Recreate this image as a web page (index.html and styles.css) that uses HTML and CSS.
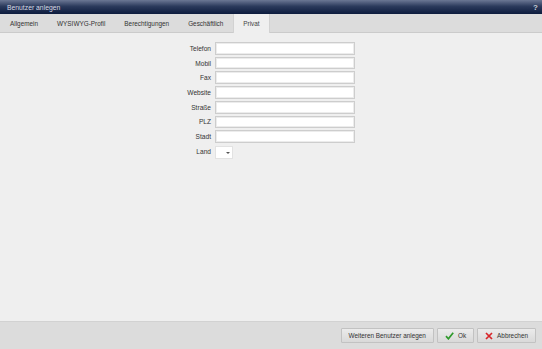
FILE: index.html
```html
<!DOCTYPE html>
<html>
<head>
    <title>Benutzer anlegen</title>
    <link rel="stylesheet" href="styles.css">
</head>
<body>
    <div class="dialog">
        <div class="titlebar">
            <span class="title">Benutzer anlegen</span>
            <span class="help">?</span>
        </div>
        <div class="tabs">
            <div class="tab">Allgemein</div>
            <div class="tab">WYSIWYG-Profil</div>
            <div class="tab">Berechtigungen</div>
            <div class="tab">Geschäftlich</div>
            <div class="tab active">Privat</div>
        </div>
        <div class="content">
            <div class="form">
                <label>Telefon</label><input type="text">
                <label>Mobil</label><input type="text">
                <label>Fax</label><input type="text">
                <label>Website</label><input type="text">
                <label>Straße</label><input type="text">
                <label>PLZ</label><input type="text">
                <label>Stadt</label><input type="text">
                <label>Land</label>
                <div class="select"><span class="arrow"></span></div>
            </div>
        </div>
        <div class="footer">
            <button class="btn">Weiteren Benutzer anlegen</button>
            <button class="btn">
                <svg width="9" height="8" viewBox="0 0 9 8"><polyline points="1,4.2 3.4,6.8 8.2,0.8" fill="none" stroke="#2f9a2c" stroke-width="1.7"/></svg>
                Ok
            </button>
            <button class="btn">
                <svg width="8" height="8" viewBox="0 0 8 8"><path d="M1 1 L7 7 M7 1 L1 7" stroke="#d8262a" stroke-width="1.7"/></svg>
                Abbrechen
            </button>
        </div>
    </div>
</body>
</html>
```

FILE: styles.css
```css
body {
    margin: 0;
    font-family: 'Liberation Sans', Arial, sans-serif;
    background-color: #efefef;
}

.dialog {
    display: flex;
    flex-direction: column;
    height: 349px;
    width: 542px;
}

.titlebar {
    height: 14px;
    display: flex;
    align-items: center;
    justify-content: space-between;
    padding: 0 4px 0 7px;
    background: linear-gradient(#6b7794, #2b3a5c 45%, #0c1b3d);
    color: #d9dce6;
    font-size: 6.8px;
}

.help {
    font-weight: bold;
    font-size: 8px;
    color: #c9cdd6;
}

.tabs {
    display: flex;
    height: 18px;
    background-color: #dcdcdc;
    border-bottom: 1px solid #cbcbcb;
    font-size: 6.4px;
    color: #333;
}

.tab {
    display: flex;
    align-items: center;
    padding: 0 9.5px;
}

.tab:first-child {
    padding-left: 10px;
}

.tab.active {
    background-color: #efefef;
    border-left: 1px solid #d2d2d2;
    border-right: 1px solid #d2d2d2;
    margin-bottom: -1px;
    color: #444;
}

.content {
    flex: 1;
    padding-top: 9px;
}

.form {
    display: grid;
    grid-template-columns: 61px 140px;
    grid-auto-rows: 12.7px;
    column-gap: 4px;
    row-gap: 2.03px;
    margin-left: 150px;
    font-size: 6.6px;
    color: #333;
}

.form label {
    text-align: right;
    align-self: center;
}

.form input {
    box-sizing: border-box;
    height: 12.7px;
    width: 140px;
    margin: 0;
    padding: 0;
    border: 1px solid #cdcdcd;
    box-shadow: inset 0 0 0 1px #ececec;
    background: #fff;
}

.select {
    position: relative;
    box-sizing: border-box;
    width: 18px;
    height: 13px;
    margin-top: 1px;
    background: #fff;
    border: 1px solid #e2e2e2;
}

.arrow {
    position: absolute;
    left: 10px;
    top: 5px;
    border-left: 2px solid transparent;
    border-right: 2px solid transparent;
    border-top: 2px solid #555;
}

.footer {
    height: 28px;
    display: flex;
    align-items: center;
    justify-content: flex-end;
    gap: 3px;
    padding-right: 6px;
    background-color: #dcdcdc;
    border-top: 1px solid #d2d2d2;
    box-sizing: border-box;
}

.btn {
    display: flex;
    align-items: center;
    gap: 4px;
    height: 15px;
    padding: 0 7px;
    font-family: 'Liberation Sans', Arial, sans-serif;
    font-size: 6.4px;
    color: #333;
    background: linear-gradient(#ebebeb, #d9d9d9);
    border: 1px solid #c2c2c2;
    border-radius: 1px;
}
```
